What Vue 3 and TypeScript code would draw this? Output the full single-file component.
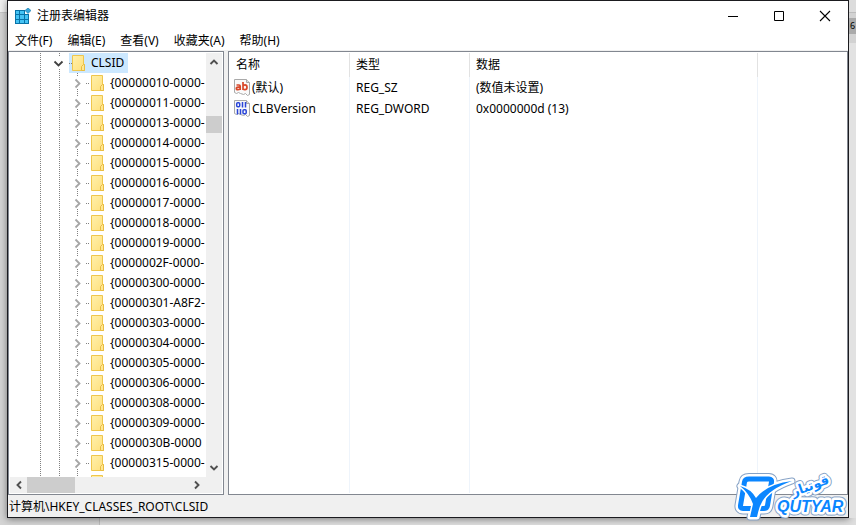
<script setup lang="ts">
import { ref } from 'vue'

interface RegistryValue {
  name: string
  type: string
  data: string
  kind: 'text' | 'binary'
}

const menus: string[] = ['文件(F)', '编辑(E)', '查看(V)', '收藏夹(A)', '帮助(H)']

const keys: string[] = [
  '{00000010-0000-', '{00000011-0000-', '{00000013-0000-', '{00000014-0000-',
  '{00000015-0000-', '{00000016-0000-', '{00000017-0000-', '{00000018-0000-',
  '{00000019-0000-', '{0000002F-0000-', '{00000300-0000-', '{00000301-A8F2-',
  '{00000303-0000-', '{00000304-0000-', '{00000305-0000-', '{00000306-0000-',
  '{00000308-0000-', '{00000309-0000-', '{0000030B-0000', '{00000315-0000-',
]

const values: RegistryValue[] = [
  { name: '(默认)', type: 'REG_SZ', data: '(数值未设置)', kind: 'text' },
  { name: 'CLBVersion', type: 'REG_DWORD', data: '0x0000000d (13)', kind: 'binary' },
]

const path = ref('计算机\\HKEY_CLASSES_ROOT\\CLSID')
</script>

<template>
  <div class="desktop">
    <svg width="0" height="0" class="defs" aria-hidden="true">
      <defs>
        <linearGradient id="folder-fill" x1="0" y1="0" x2="1" y2="1">
          <stop offset="0" stop-color="#fff0ab" />
          <stop offset="1" stop-color="#ffe07c" />
        </linearGradient>
        <g id="folder">
          <path d="M.5.5h11v9h1v6H.5z" fill="url(#folder-fill)" stroke="#efc64c" />
          <path d="M9.500 15.500v-4l2-2h1v6z" fill="#ffe793" stroke="#e9bd40" />
        </g>
      </defs>
    </svg>
    <div class="behind-left"></div>
    <main class="window">
      <header class="titlebar">
        <svg class="app-icon" width="16" height="16" viewBox="0 0 16 16" aria-hidden="true">
          <rect x="0" y="2" width="14" height="14" fill="#0873a8" />
          <g fill="#45c3f4">
            <rect x="1" y="3" width="3" height="3" /><rect x="5" y="3" width="4" height="3" />
            <rect x="1" y="7" width="3" height="4" /><rect x="5" y="7" width="4" height="4" /><rect x="10" y="7" width="3" height="4" />
            <rect x="1" y="12" width="3" height="3" /><rect x="5" y="12" width="4" height="3" /><rect x="10" y="12" width="3" height="3" />
          </g>
          <path d="M10 0h6v6h-6z" fill="#fff" />
          <path d="M13 0l3 2.500-3 3-3-3z" fill="#35a5da" stroke="#0873a8" stroke-width=".6" />
        </svg>
        <h1 class="title">注册表编辑器</h1>
        <div class="controls">
          <button class="control" aria-label="最小化">
            <svg width="12" height="12" viewBox="0 0 12 12"><path d="M1 6.500h10" stroke="#000" /></svg>
          </button>
          <button class="control" aria-label="最大化">
            <svg width="12" height="12" viewBox="0 0 12 12"><path d="M1.500 1.500h9v9h-9z" fill="none" stroke="#000" /></svg>
          </button>
          <button class="control" aria-label="关闭">
            <svg width="12" height="12" viewBox="0 0 12 12"><path d="M1 1l10 10M11 1L1 11" stroke="#000" stroke-width="1.100" /></svg>
          </button>
        </div>
      </header>

      <nav class="menubar">
        <button v-for="menu in menus" :key="menu" class="menu">{{ menu }}</button>
      </nav>

      <div class="panes">
        <section class="tree-pane">
          <div class="tree-row">
            <div class="tree">
              <div class="branch">
                <span class="guide"></span>
                <span class="guide"></span>
              </div>
              <ul class="keys">
                <li class="key root">
                  <button class="toggle" aria-label="折叠">
                    <svg width="11" height="9" viewBox="0 0 11 9"><path d="M1.500 2.500l4 4 4-4" fill="none" stroke="#404040" stroke-width="1.800" /></svg>
                  </button>
                  <span class="selected">
                    <span class="stub"></span>
                    <svg class="folder" width="14" height="16" viewBox="0 0 14 16" aria-hidden="true"><use href="#folder" /></svg>
                    <span class="label">CLSID</span>
                  </span>
                </li>
                <li v-for="key in keys" :key="key" class="key child">
                  <button class="toggle" aria-label="展开">
                    <svg width="9" height="11" viewBox="0 0 9 11"><path d="M2.500 1.500l4 4-4 4" fill="none" stroke="#a6a6a6" stroke-width="1.800" /></svg>
                  </button>
                  <span class="stub"></span>
                  <svg class="folder" width="14" height="16" viewBox="0 0 14 16" aria-hidden="true"><use href="#folder" /></svg>
                  <span class="label">{{ key }}</span>
                </li>
                <li class="key child" aria-hidden="true">
                  <span class="toggle"></span>
                  <span class="stub hidden"></span>
                  <svg class="folder" width="14" height="16" viewBox="0 0 14 16"><use href="#folder" /></svg>
                </li>
              </ul>
            </div>
            <div class="vscroll">
              <button class="arrow" aria-label="向上滚动">
                <svg width="10" height="8" viewBox="0 0 10 8"><path d="M1.500 6L5 2.500 8.500 6" fill="none" stroke="#505050" stroke-width="1.900" /></svg>
              </button>
              <div class="track"><div class="thumb"></div></div>
              <button class="arrow" aria-label="向下滚动">
                <svg width="10" height="8" viewBox="0 0 10 8"><path d="M1.500 2L5 5.500 8.500 2" fill="none" stroke="#505050" stroke-width="1.900" /></svg>
              </button>
            </div>
          </div>
          <div class="hscroll">
            <button class="arrow" aria-label="向左滚动">
              <svg width="8" height="10" viewBox="0 0 8 10"><path d="M6 1.500L2.500 5 6 8.500" fill="none" stroke="#505050" stroke-width="1.900" /></svg>
            </button>
            <div class="track"><div class="thumb"></div></div>
            <button class="arrow" aria-label="向右滚动">
              <svg width="8" height="10" viewBox="0 0 8 10"><path d="M2 1.500L5.500 5 2 8.500" fill="none" stroke="#505050" stroke-width="1.900" /></svg>
            </button>
            <span class="corner"></span>
          </div>
        </section>

        <section class="value-pane">
          <table class="values">
            <colgroup>
              <col class="col-name" /><col class="col-type" /><col class="col-data" /><col />
            </colgroup>
            <thead>
              <tr><th>名称</th><th>类型</th><th>数据</th><td></td></tr>
            </thead>
            <tbody>
              <tr v-for="value in values" :key="value.name">
                <td class="name">
                  <span class="name-box">
                    <svg width="16" height="17" viewBox="0 0 16 17" aria-hidden="true">
                      <path d="M.5.5h12l3 3v12l-2 1-2-2-2 1-3-1-2-1-2 1-2-1z" fill="#fafafa" stroke="#a9a9a9" />
                      <path d="M12.500.5v3h3" fill="#ddd" stroke="#a9a9a9" />
                      <g v-if="value.kind === 'text'" fill="none" stroke="#d8482a" stroke-width="1.700">
                        <path d="M2.500 6h2.500q1.200 0 1.200 1.300V11M6.200 8.200H4q-1.700 0-1.700 1.300T4 10.700q2 0 2.200-1.400" />
                        <path d="M9 3v8M9 7q.6-1.200 2-1.200 2 0 2 2.400t-2 2.500q-1.400 0-2-1.100" />
                      </g>
                      <g v-else fill="none" stroke="#2b46d8" stroke-width="1.500">
                        <rect x="2.700" y="2.700" width="3" height="4" rx="1" />
                        <path d="M8.500 2v5.500M11.500 2v5.500M3.500 9v5.500M6.500 9v5.500" />
                        <rect x="9" y="9.700" width="3.200" height="4" rx="1" />
                      </g>
                    </svg>
                    {{ value.name }}
                  </span>
                </td>
                <td>{{ value.type }}</td>
                <td>{{ value.data }}</td>
                <td></td>
              </tr>
              <tr class="filler"><td></td><td></td><td></td><td></td></tr>
            </tbody>
          </table>
        </section>
      </div>

      <footer class="statusbar">{{ path }}</footer>
    </main>
    <div class="behind-right"><span class="behind-tab">6</span></div>

    <svg class="brand" width="126" height="57" viewBox="0 0 126 57" role="img" aria-label="QUTYAR">
      <defs>
        <path id="brand-frame" d="M19 11h20q3 0 2.500 3l-4 23.500q-.5 3-3.500 3H13q-3 0-2.500-3l4-23.500q.5-3 4.500-3z" />
        <path id="brand-y" d="M10 18Q21 21 26 30Q37 16 62 13Q39 21 32 34Q29 39 27 49H20L23 36Q19 25 10 18z" />
        <g id="brand-words">
          <text x="47" y="44" class="brand-latin">QUTYAR</text>
          <text x="81" y="22" text-anchor="middle" transform="rotate(-20 81 20)" class="brand-persian">قوتیار</text>
        </g>
      </defs>
      <g fill="#86a2c6" stroke="#86a2c6" stroke-width="7" stroke-linejoin="round">
        <use href="#brand-frame" stroke-width="12" /><use href="#brand-y" /><use href="#brand-words" />
      </g>
      <g fill="#fff" stroke="#fff" stroke-width="5" stroke-linejoin="round">
        <use href="#brand-frame" stroke-width="10" /><use href="#brand-y" /><use href="#brand-words" />
      </g>
      <use href="#brand-frame" fill="none" stroke="#0b86ff" stroke-width="5" />
      <use href="#brand-y" fill="#fff" stroke="#fff" stroke-width="3" />
      <g fill="#0b86ff">
        <use href="#brand-y" /><use href="#brand-words" />
      </g>
    </svg>
  </div>
</template>

<style>
body {
  background: #dcdcdc;
}
</style>

<style scoped>
* {
  box-sizing: border-box;
}

.desktop {
  position: relative;
  display: grid;
  grid-template-columns: 7px minmax(0, 1fr) 7px;
  min-height: 100vh;
  padding-bottom: 7px;
  overflow: hidden;
  background: linear-gradient(90deg, #d4d4d4 99px, #bdbdbd 99px, #bdbdbd 100px, #dedede 100px);
  color: #000;
  font: 12px/20px "Noto Sans", "Noto Sans CJK SC", sans-serif;
}

button {
  display: flex;
  align-items: center;
  justify-content: center;
  padding: 0;
  border: 0;
  background: none;
  color: inherit;
  font: inherit;
}

svg {
  display: block;
  flex: none;
}

.defs {
  position: absolute;
}

.behind-left {
  background: linear-gradient(#efefef 12px, #c6c6c6 12px, #c6c6c6 13px, #d4d4d4 13px);
}

.behind-right {
  padding-top: 18px;
  overflow: hidden;
  background: linear-gradient(#dcdcdc 12px, #bcbcbc 12px, #bcbcbc 13px, #d2d2d2 13px, #d2d2d2 43px, #e2e2e2 43px);
}

.behind-tab {
  display: block;
  padding-left: 1px;
  background: #aaa;
  font-size: 9px;
  line-height: 16px;
}

.window {
  display: flex;
  flex-direction: column;
  border: 1px solid #1b1b1f;
  background: #f0f0f0;
  box-shadow: 0 1px 7px #0007;
}

.titlebar {
  display: flex;
  align-items: center;
  height: 29px;
  padding-left: 7px;
  gap: 6px;
  background: #fff;
}

.title {
  flex: 1;
  margin: 0;
  font-size: 12px;
  font-weight: 400;
}

.controls {
  display: flex;
}

.control {
  width: 46px;
  height: 29px;
}

.menubar {
  display: flex;
  gap: 15px;
  height: 21px;
  padding: 1px 0 0 7px;
  background: #fff;
  border-bottom: 1px solid #f0f0f0;
}

.menu {
  height: 20px;
}

.panes {
  display: flex;
  flex: 1;
  gap: 4px;
  min-height: 0;
}

.tree-pane,
.value-pane {
  border: 1px solid #828790;
  background: #fff;
}

.tree-pane {
  display: flex;
  flex-direction: column;
  width: 216px;
  padding: 1px;
}

.tree-row {
  display: flex;
  flex: 1;
  min-height: 0;
}

.tree {
  display: flex;
  flex: 1;
  min-width: 0;
  height: 424px;
  overflow: hidden;
}

.branch {
  display: flex;
  gap: 18px;
  width: 40px;
  margin-right: -1px;
  padding-left: 30px;
}

.guide {
  flex: none;
  width: 1px;
  background: repeating-linear-gradient(#808080 0 1px, transparent 1px 2px);
}

.keys {
  flex: 1;
  min-width: 0;
  margin: 0;
  padding: 0 0 0 4px;
  list-style: none;
}

.key {
  display: flex;
  align-items: center;
  height: 20px;
  white-space: nowrap;
}

.toggle {
  flex: none;
  width: 11px;
  height: 12px;
  background: #fff;
}

.root .toggle {
  position: relative;
  margin-right: 5px;
}

.child {
  padding-left: 19px;
  background: repeating-linear-gradient(#808080 0 1px, transparent 1px 2px) 24px 0 / 1px 20px no-repeat;
}

.stub {
  flex: none;
  width: 3px;
  height: 1px;
  background: repeating-linear-gradient(90deg, #808080 0 1px, transparent 1px 2px);
}

.stub.hidden {
  visibility: hidden;
}

.child .stub {
  margin: 0 2px 0 3px;
}

.folder {
  margin-right: 5px;
}

.selected {
  display: flex;
  align-items: center;
  height: 20px;
  padding-right: 4px;
  background: #cce8ff;
}

.vscroll {
  display: flex;
  flex-direction: column;
  width: 16px;
  background: #f0f0f0;
}

.vscroll .arrow {
  height: 18px;
}

.track {
  flex: 1;
}

.vscroll .thumb {
  height: 17px;
  margin-top: 45px;
  background: #cdcdcd;
}

.hscroll {
  display: flex;
  height: 16px;
  background: #f0f0f0;
}

.hscroll .arrow {
  width: 17px;
}

.hscroll .thumb {
  width: 48px;
  height: 16px;
  background: #cdcdcd;
}

.corner {
  width: 17px;
}

.value-pane {
  display: flex;
  flex: 1;
  min-width: 0;
  padding: 1px;
}

.values {
  width: 100%;
  table-layout: fixed;
  border-collapse: separate;
  border-spacing: 0;
}

.col-name,
.col-type {
  width: 120px;
}

.col-data {
  width: 288px;
}

.values th,
.values td {
  height: 21px;
  padding: 0 6px;
  border-right: 1px solid #eef4fb;
  font-weight: 400;
  text-align: left;
  white-space: nowrap;
}

.values thead th {
  height: 24px;
  border-right-color: #e2e2e2;
}

.values tr > :last-child {
  border-right: 0;
}

.values td.name {
  padding: 0 4px;
}

.name-box {
  display: flex;
  align-items: center;
  gap: 2px;
}

.values .filler td {
  height: auto;
}

.values .filler {
  height: 100%;
}

.statusbar {
  height: 22px;
  padding: 1px 1px 0;
  line-height: 22px;
}

.brand {
  position: absolute;
  right: 0;
  bottom: 0;
}

.brand-latin {
  font: italic 700 16px "Liberation Sans", sans-serif;
}

.brand-persian {
  font: 700 13px "DejaVu Sans", sans-serif;
  direction: rtl;
}
</style>
